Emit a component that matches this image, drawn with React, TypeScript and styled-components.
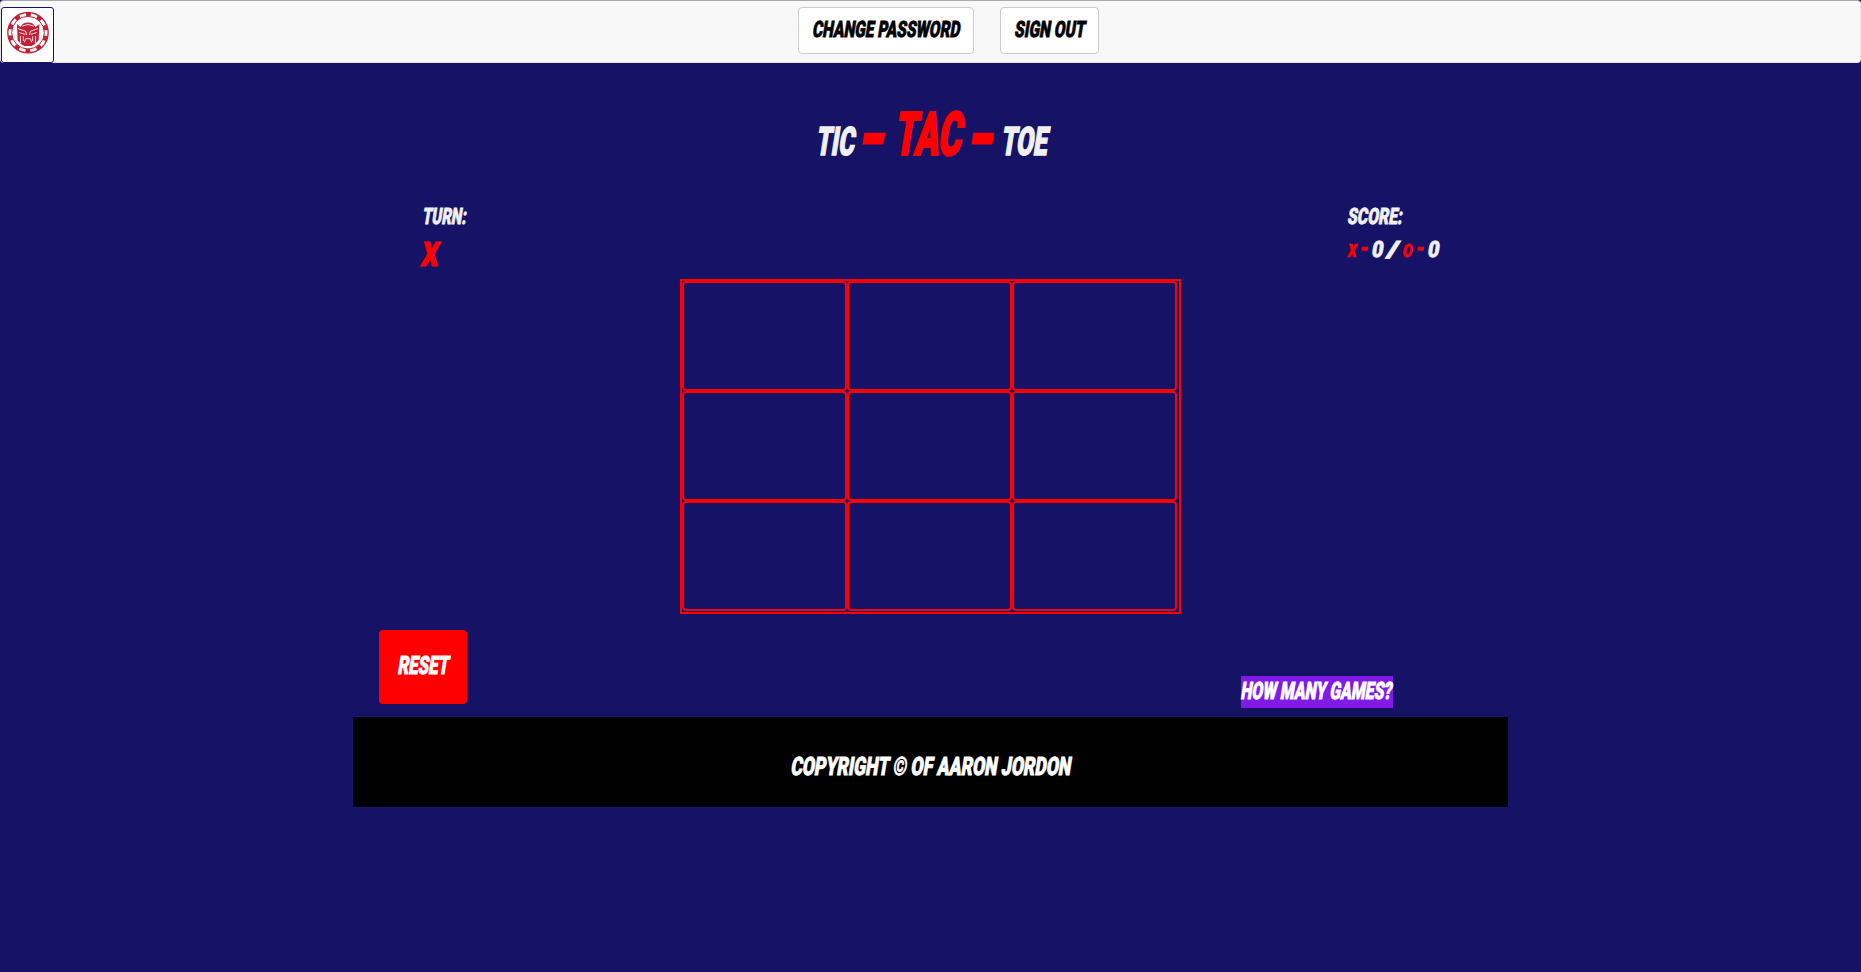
import React, { useLayoutEffect, useRef, useState } from "react";
import styled, { createGlobalStyle } from "styled-components";

const NAVY = "#161367";
const RED = "#ff0000";
const OFF_WHITE = "#f0f0f0";

const GlobalStyle = createGlobalStyle`
  * { box-sizing: border-box; }
  body {
    margin: 0;
    background: ${NAVY};
    color: ${OFF_WHITE};
    font-family: Roboto, "Liberation Sans", sans-serif;
  }
`;

const SLANT = Math.tan((9 * Math.PI) / 180);
const CAP_HEIGHT = 0.711;

const LetterBox = styled.span<{ $w: number; $h: number; $color?: string }>`
  display: block;
  flex: none;
  width: ${(p) => p.$w}px;
  height: ${(p) => p.$h}px;
  line-height: ${(p) => p.$h}px;
  font-size: ${(p) => p.$h / CAP_HEIGHT}px;
  font-weight: 900;
  -webkit-text-stroke: 0.035em currentColor;
  white-space: pre;
  color: ${(p) => p.$color || "inherit"};
`;

const Letters = styled.span`
  display: inline-block;
  vertical-align: top;
  transform-origin: left bottom;
`;

type LetteringProps = { text: string; w: number; h: number; color?: string; className?: string };

/* Condensed, slanted display lettering fitted to a given width and cap height. */
function Lettering({ text, w, h, color, className }: LetteringProps) {
  const ref = useRef<HTMLSpanElement>(null);
  const [scale, setScale] = useState(1);
  useLayoutEffect(() => {
    if (ref.current) setScale((w + 1 - h * SLANT) / ref.current.offsetWidth);
  }, [text, w, h]);
  return (
    <LetterBox $w={w} $h={h} $color={color} className={className}>
      <Letters ref={ref} style={{ transform: `translateX(-1px) skewX(-9deg) scaleX(${scale})` }}>{text}</Letters>
    </LetterBox>
  );
}

const Navbar = styled.nav`
  display: flex;
  align-items: flex-start;
  height: 63px;
  padding: 5px 0 0 1px;
  background: #f8f8f8;
  border: 1px solid #e7e7e7;
  border-top: 1px solid #a9a9a9;
  border-radius: 4px;
`;

const Brand = styled.a`
  display: block;
  width: 53px;
  height: 56px;
  margin: 1px 0 0 -1px;
  background: #fff;
  border: 1px solid ${NAVY};
  border-radius: 3px;
`;

const NavButton = styled.button<{ $w: number }>`
  display: flex;
  width: ${(p) => p.$w}px;
  height: 47px;
  margin: 1px 26px 0 0;
  padding: 13px 0 0 14px;
  background: #fff;
  border: 1px solid #ccc;
  border-radius: 4px;
  color: #000;
  font-family: inherit;
  text-align: left;
`;

const NavActions = styled.div`
  display: flex;
  margin-left: 744px;
`;

const Title = styled.h1`
  display: flex;
  align-items: flex-end;
  height: 45px;
  margin: 48px 0 0;
  padding-left: 816px;
`;

const TitleWord = styled(Lettering)<{ $before?: number }>`
  margin-left: ${(p) => p.$before || 0}px;
`;

const TitleDash = styled(Lettering)<{ $before: number }>`
  margin: 0 0 -6px ${(p) => p.$before}px;
`;

const Status = styled.section`
  display: flex;
  justify-content: space-between;
  height: 71px;
  margin-top: 52px;
  padding: 0 420px 0 423px;
`;

const StatusBlock = styled.div`
  display: flex;
  flex-direction: column;
`;

const TurnMark = styled(Lettering)`
  margin: 19px 0 0 -2px;
`;

const ScoreLine = styled.div`
  display: flex;
  align-items: flex-end;
  gap: 2px;
  width: 93px;
  margin-top: 16px;
`;

const Board = styled.div`
  display: grid;
  grid-template-columns: repeat(3, 165px);
  grid-auto-rows: 110px;
  width: 501px;
  height: 335px;
  margin-left: 680px;
  border: 2px solid ${RED};
`;

const Cell = styled.div`
  border: 2px solid ${RED};
  border-radius: 4px;
`;

const Controls = styled.section`
  display: flex;
  justify-content: space-between;
  align-items: flex-start;
  height: 103px;
  padding: 16px 468px 0 379px;
`;

const ResetButton = styled.button`
  width: 88px;
  height: 74px;
  padding: 0 0 2px 19px;
  background: ${RED};
  border: 0;
  border-radius: 4px;
  color: #fff;
  font-family: inherit;
  text-align: left;
`;

const GamesLabel = styled.button`
  display: flex;
  width: 152px;
  height: 32px;
  margin-top: 46px;
  padding: 7px 0 0;
  background: #801ae6;
  border: 0;
  color: #fff;
  font-family: inherit;
`;

const Footer = styled.footer`
  display: flex;
  justify-content: center;
  width: 1155px;
  height: 90px;
  margin-left: 353px;
  padding: 41px 0 0 3px;
  background: #000;
  color: #fff;
`;

function Logo() {
  const c = "#bd2336";
  return (
    <svg width="51" height="54" viewBox="5 24 153 162" aria-hidden="true">
      <g fill="none" stroke={c}>
        <circle cx="83" cy="98" r="60.5" strokeWidth="4" />
        <circle cx="83" cy="98" r="49" strokeWidth="3" />
        <circle cx="83" cy="98" r="55" strokeWidth="12" strokeDasharray="15 19.56" strokeDashoffset="25" />
      </g>
      <path fill={c} d="M50 72 L60 81 L68 71 Q83 64 98 71 L106 81 L117 72 L115 121 L103 133 L94 138 L72 138 L61 132 L52 121Z" />
      <g fill="none" stroke="#fff" strokeWidth="2.5">
        <path d="M66 78 Q83 69 100 78" />
        <path d="M53 86 L76 94 L79 105 M113 86 L90 94 L87 105" />
        <path d="M57 98 L75 103 M109 98 L91 103" />
        <path d="M60 108 L61 130 M106 108 L105 130 M69 109 L69 123 M97 109 L97 123" />
        <path d="M76 116 L90 116 L94 127 M76 116 L72 127" />
      </g>
    </svg>
  );
}

export default function App() {
  return (
    <>
      <GlobalStyle />
      <Navbar>
        <Brand><Logo /></Brand>
        <NavActions>
          <NavButton $w={176}><Lettering text="CHANGE PASSWORD" w={149} h={16} /></NavButton>
          <NavButton $w={99}><Lettering text="SIGN OUT" w={72} h={16} /></NavButton>
        </NavActions>
      </Navbar>
      <Title>
        <TitleWord text="TIC" w={42} h={28} />
        <TitleDash text="-" w={36} h={52} color={RED} $before={-1} />
        <TitleWord text="TAC" w={73} h={43} color={RED} $before={1} />
        <TitleDash text="-" w={36} h={52} color={RED} $before={-1} />
        <TitleWord text="TOE" w={50} h={28} $before={-1} />
      </Title>
      <Status>
        <StatusBlock>
          <Lettering text="TURN:" w={45} h={16} />
          <TurnMark text="X" w={20} h={24} color={RED} />
        </StatusBlock>
        <StatusBlock>
          <Lettering text="SCORE:" w={56} h={16} />
          <ScoreLine>
            <Lettering text="X" w={10} h={13} color={RED} />
            <Lettering text="-" w={10} h={17} color={RED} />
            <Lettering text="0" w={13} h={16} />
            <Lettering text="/" w={14} h={16} />
            <Lettering text="O" w={11} h={13} color={RED} />
            <Lettering text="-" w={10} h={17} color={RED} />
            <Lettering text="0" w={13} h={16} />
          </ScoreLine>
        </StatusBlock>
      </Status>
      <Board>
        {Array.from({ length: 9 }, (_, i) => <Cell key={i} />)}
      </Board>
      <Controls>
        <ResetButton><Lettering text="RESET" w={53} h={18} /></ResetButton>
        <GamesLabel><Lettering text="HOW MANY GAMES?" w={153} h={17} /></GamesLabel>
      </Controls>
      <Footer><Lettering text="COPYRIGHT © OF AARON JORDON" w={282} h={18} /></Footer>
    </>
  );
}
